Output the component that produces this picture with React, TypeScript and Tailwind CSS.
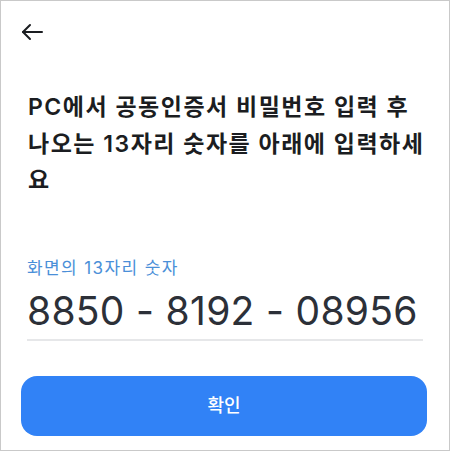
import React from "react";

const FONT = { fontFamily: 'Inter, "Noto Sans CJK KR", sans-serif' };

function BackArrow() {
  return (
    <svg width="22" height="18" viewBox="0 0 22 18" fill="none" stroke="#1b1d21" strokeWidth="2" strokeLinecap="round" strokeLinejoin="round">
      <path d="M21 9H2" />
      <path d="M9 2L2 9l7 7" />
    </svg>
  );
}

export default function App() {
  return (
    <div
      className="w-[450px] h-[451px] bg-white border border-[#c9c9c9] flex flex-col overflow-hidden"
      style={FONT}
    >
      <div className="pt-[22px] pl-[20px] h-[40px]">
        <BackArrow />
      </div>

      <h1 className="mt-[48px] pl-[27px] w-[430px] text-[23px] leading-[36.5px] font-semibold text-[#1b1d21] tracking-[1.5px]">
        PC에서 공동인증서 비밀번호 입력 후 나오는 13자리 숫자를 아래에 입력하세요
      </h1>

      <div className="mt-[58px] px-[26px]">
        <p className="text-[17px] leading-[22px] text-[#4a8fd8] tracking-[1.4px]">화면의 13자리 숫자</p>
        <div className="mt-[9px] pb-[5px] border-b-2 border-[#e6e7e9]">
          <span className="text-[39px] leading-[46px] text-[#2c3038] tracking-[0.3px]">
            8850 - 8192 - 08956
          </span>
        </div>
      </div>

      <div className="mt-[35px] pl-[20px] pr-[22px]">
        <button className="w-full h-[60px] rounded-[16px] bg-[#3182f6] text-white text-[18px] font-medium">
          확인
        </button>
      </div>
    </div>
  );
}
